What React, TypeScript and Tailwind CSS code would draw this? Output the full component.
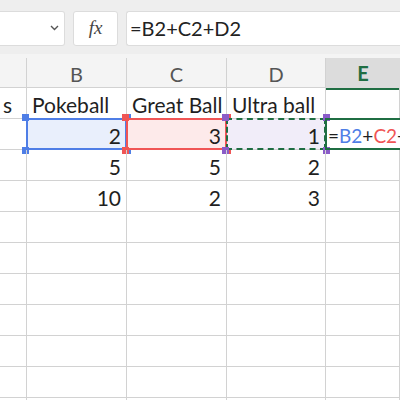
import React from "react";

const font = { fontFamily: "Lato, 'Open Sans', sans-serif" };

type Sel = "blue" | "red" | "purple" | null;

const selStyles: Record<string, { bg: string; border: string; handle: string }> = {
  blue: { bg: "bg-[#e9effc]", border: "border-[2.5px] border-[#4f7ee6]", handle: "bg-[#4f7ee6]" },
  red: { bg: "bg-[#fdeaea]", border: "border-[2.5px] border-[#f05555]", handle: "bg-[#f05555]" },
  purple: { bg: "bg-[#f1edf9]", border: "border-[2.5px] border-dashed border-[#1f6e43]", handle: "bg-[#8a5cc8]" },
};

function Handles({ color }: { color: string }) {
  return (
    <>
      <span className={`absolute -left-[4px] -top-[4px] h-[7px] w-[7px] ${color}`} />
      <span className={`absolute -right-[4px] -top-[4px] h-[7px] w-[7px] ${color}`} />
      <span className={`absolute -left-[4px] -bottom-[4px] h-[7px] w-[7px] ${color}`} />
      <span className={`absolute -right-[4px] -bottom-[4px] h-[7px] w-[7px] ${color}`} />
    </>
  );
}

function Cell({ children, right, sel }: { children?: React.ReactNode; right?: boolean; sel?: Sel }) {
  const s = sel ? selStyles[sel] : null;
  return (
    <div
      className={`relative h-[31px] border-r border-b border-[#d2d2d2] flex items-end pb-[3px] px-[5px] text-[21px] leading-none text-[#1f1f1f] whitespace-nowrap ${
        right ? "justify-end" : "justify-start"
      } ${s ? s.bg : ""}`}
    >
      {children}
      {s && (
        <div className={`absolute -left-[1px] -top-[1px] -right-[1px] -bottom-[1px] ${s.border} pointer-events-none`} />
      )}
      {s && (
        <div className="absolute -left-[1px] -top-[1px] -right-[1px] -bottom-[1px] pointer-events-none">
          <Handles color={s.handle} />
        </div>
      )}
    </div>
  );
}

export default function App() {
  const cols = "grid grid-cols-[27px_100px_100px_99px_1fr]";
  const emptyRows = Array.from({ length: 8 });

  return (
    <div className="w-[400px] h-[400px] overflow-hidden bg-white" style={font}>
      {/* Toolbar */}
      <div className="h-[54px] bg-[#eeeeee] flex items-center gap-[8px] pt-[2px]">
        <div className="w-[65px] h-[35px] bg-white border border-l-0 border-[#dcdcdc] rounded-r-[3px] relative">
          <svg className="absolute right-[5px] top-[13px]" width="9" height="6" viewBox="0 0 9 6">
            <path d="M1 1l3.5 3.5L8 1" fill="none" stroke="#555" strokeWidth="1.4" />
          </svg>
        </div>
        <div className="w-[45px] h-[35px] bg-white border border-[#dcdcdc] rounded-[3px] flex items-center justify-center">
          <span className="text-[19px] text-[#444] italic" style={{ fontFamily: "'Liberation Serif', serif" }}>
            fx
          </span>
        </div>
        <div className="flex-1 h-[35px] bg-white border border-r-0 border-[#dcdcdc] rounded-l-[3px] flex items-center px-[3px] text-[20px] text-[#222]">
          =B2+C2+D2
        </div>
      </div>

      {/* Column headers */}
      <div className={`${cols} h-[34px] bg-[#f4f4f4] border-b border-[#d2d2d2]`}>
        <div className="border-r border-[#d2d2d2] mt-[4px]" />
        {["B", "C", "D"].map((c) => (
          <div key={c} className="border-r border-[#d2d2d2] mt-[4px] flex items-center justify-center text-[20px] text-[#555]">
            {c}
          </div>
        ))}
        <div className="bg-[#dcdcdc] border-b-2 border-[#1f6e43] mt-[4px] flex items-center justify-center text-[20px] font-bold text-[#1f6e43]">
          E
        </div>
      </div>

      {/* Rows */}
      <div className={cols}>
        <Cell>
          <span className="-ml-[2px]">s</span>
        </Cell>
        <Cell>Pokeball</Cell>
        <Cell>Great Ball</Cell>
        <Cell>Ultra ball</Cell>
        <Cell />

        <Cell />
        <Cell right sel="blue">2</Cell>
        <Cell right sel="red">3</Cell>
        <Cell right sel="purple">1</Cell>
        <div className="relative h-[31px] border-b border-[#d2d2d2]">
          <div className="absolute -left-[1px] -top-[1px] right-0 -bottom-[1px] border-[2.5px] border-r-0 border-[#1f6e43] flex items-end pb-[3px] pl-[1px] text-[19px] leading-none whitespace-nowrap overflow-hidden">
            <span className="text-[#1f1f1f]">=</span>
            <span className="text-[#4f7ee6]">B2</span>
            <span className="text-[#1f1f1f]">+</span>
            <span className="text-[#f05555]">C2</span>
            <span className="text-[#1f1f1f]">+</span>
            <span className="text-[#8a5cc8]">D2</span>
          </div>
        </div>

        <Cell />
        <Cell right>5</Cell>
        <Cell right>5</Cell>
        <Cell right>2</Cell>
        <Cell />

        <Cell />
        <Cell right>10</Cell>
        <Cell right>2</Cell>
        <Cell right>3</Cell>
        <Cell />

        {emptyRows.map((_, i) => (
          <React.Fragment key={i}>
            <Cell />
            <Cell />
            <Cell />
            <Cell />
            <Cell />
          </React.Fragment>
        ))}
      </div>
    </div>
  );
}
